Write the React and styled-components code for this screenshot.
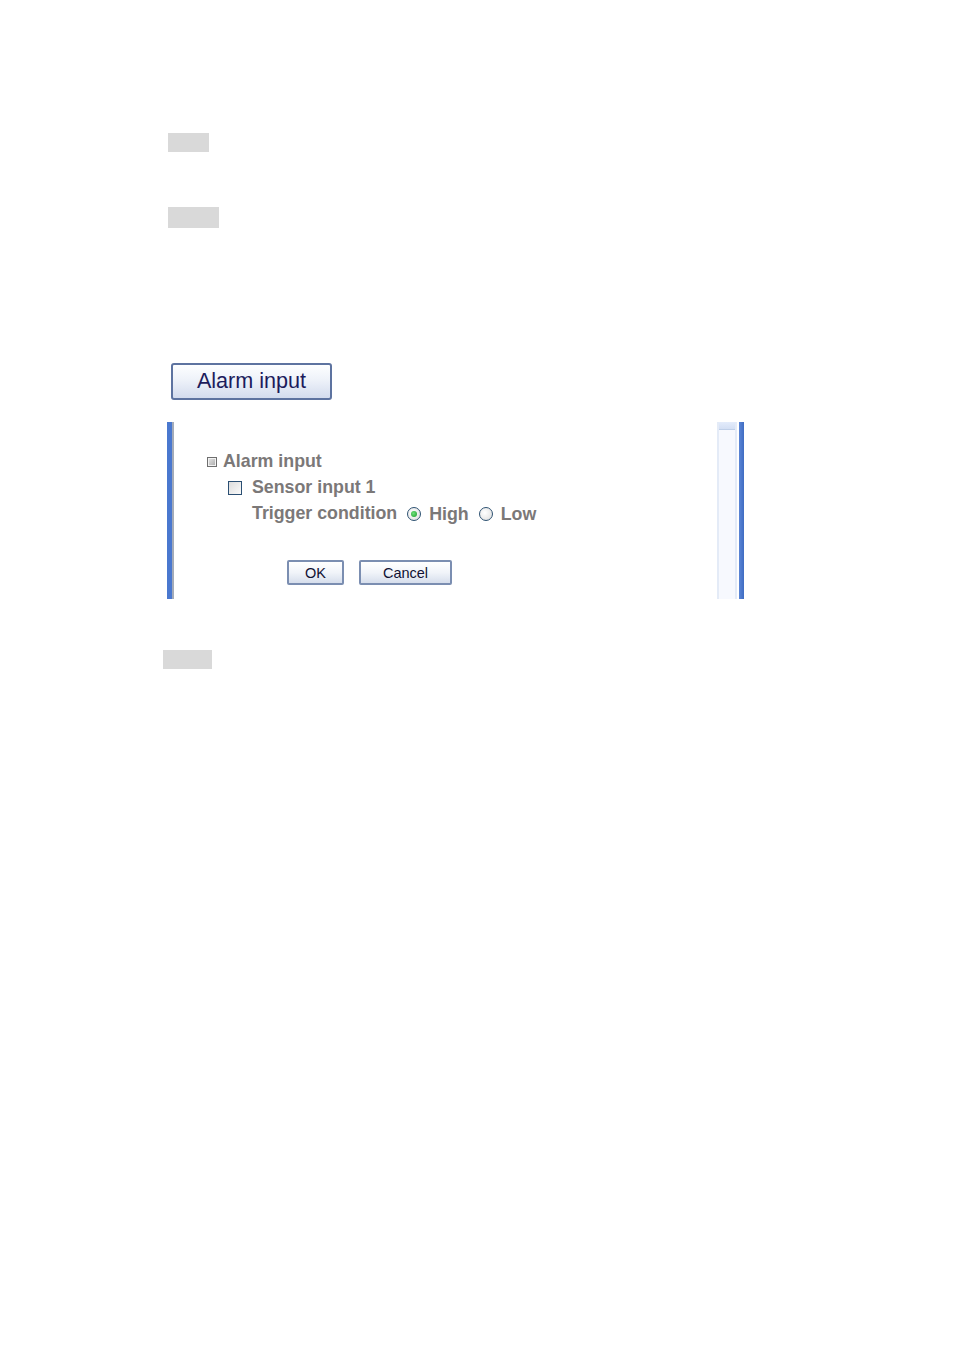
import React from "react";
import styled, { createGlobalStyle } from "styled-components";

const Global = createGlobalStyle`
  html, body { margin: 0; padding: 0; background: #ffffff; }
  body { font-family: "Liberation Sans", Arial, sans-serif; }
`;

const Page = styled.div`
  display: flex;
  flex-direction: column;
  align-items: flex-start;
  padding: 133px 0 0 163px;
  min-height: 1350px;
  box-sizing: border-box;
`;

const Placeholder = styled.div`
  width: ${(p) => p.$w}px;
  height: ${(p) => p.$h}px;
  margin-left: ${(p) => p.$left || 0}px;
  margin-top: ${(p) => p.$top || 0}px;
  background: #d9d9d9;
`;

const TabButton = styled.button`
  margin: ${(p) => p.$top}px 0 0 8px;
  width: 161px;
  height: 37px;
  box-sizing: border-box;
  border: 2px solid #5d73a0;
  border-radius: 3px;
  background: linear-gradient(#fdfeff 0%, #eef2f9 45%, #d3dcee 100%);
  color: #1c1c5c;
  font-family: "Liberation Sans", Arial, sans-serif;
  font-size: 21.6px;
  padding: 0 0 2px;
  cursor: pointer;
`;

const Panel = styled.div`
  margin: 22px 0 0 4px;
  width: 577px;
  height: 177px;
  display: flex;
  box-sizing: border-box;
  border-left: 5px solid #4a78cf;
  box-shadow: inset 2px 0 0 #a3abb9;
`;

const Content = styled.div`
  flex: 1;
  padding: 26px 0 0 35px;
  display: flex;
  flex-direction: column;
  align-items: flex-start;
`;

const Row = styled.div`
  display: flex;
  align-items: center;
  height: 26px;
  margin-left: ${(p) => p.$indent || 0}px;
  color: #7b7878;
  font-size: 17.8px;
  font-weight: bold;
  white-space: nowrap;
`;

const TreeBox = styled.span`
  width: 10px;
  height: 10px;
  box-sizing: border-box;
  border: 1px solid #6e6e6e;
  background: linear-gradient(135deg, #e8e8e8, #a9a9a9);
  box-shadow: inset 0 0 0 1px #f2f2f2;
  margin-right: 6px;
  margin-top: 2px;
`;

const CheckBox = styled.span`
  width: 14px;
  height: 14px;
  box-sizing: border-box;
  border: 1px solid #2b4f73;
  background: linear-gradient(135deg, #dcdcdc, #fafafa);
  margin-right: 10px;
  margin-top: 1px;
`;

const Radio = styled.span`
  width: 14px;
  height: 14px;
  box-sizing: border-box;
  border-radius: 50%;
  border: 1px solid #2e5272;
  background: radial-gradient(circle at 40% 40%, #ffffff, #dcdcdc);
  display: flex;
  align-items: center;
  justify-content: center;
  margin: 2px 8px 0 ${(p) => p.$gap}px;
  &::after {
    content: "";
    display: ${(p) => (p.$checked ? "block" : "none")};
    width: 6px;
    height: 6px;
    border-radius: 50%;
    background: radial-gradient(circle at 40% 40%, #6fe07a, #1a9c2a);
  }
`;

const Label = styled.span`
  margin-top: ${(p) => p.$top || 0}px;
`;

const Actions = styled.div`
  display: flex;
  gap: 15px;
  margin: 34px 0 0 80px;
`;

const SmallButton = styled.button`
  width: ${(p) => p.$w}px;
  height: 25px;
  box-sizing: border-box;
  border: 2px solid #7b8eb1;
  border-radius: 2px;
  background: linear-gradient(#ffffff 0%, #f1f4f9 50%, #d6deec 100%);
  color: #111133;
  font-family: "Liberation Sans", Arial, sans-serif;
  font-size: 14.5px;
  padding: 0;
  cursor: pointer;
`;

const Scrollbar = styled.div`
  width: 20px;
  box-sizing: border-box;
  background: #f7f9fe;
  border-left: 2px solid #e4ebf7;
  border-right: 2px solid #e4ebf7;
  display: flex;
  flex-direction: column;
`;

const Thumb = styled.div`
  height: 7px;
  background: linear-gradient(#e4ecfb, #d3dff4);
  border-bottom: 1px solid #bfcfe8;
`;

const RightEdge = styled.div`
  width: 5px;
  margin-left: 2px;
  background: linear-gradient(90deg, #5b86d6, #3f6cc2);
`;

export default function App() {
  return (
    <>
      <Global />
      <Page>
        <Placeholder $w={41} $h={19} $left={5} />
        <Placeholder $w={51} $h={21} $left={5} $top={55} />
        <TabButton $top={135}>Alarm input</TabButton>
        <Panel>
          <Content>
            <Row>
              <TreeBox />
              <Label>Alarm input</Label>
            </Row>
            <Row $indent={21}>
              <CheckBox />
              <Label>Sensor input 1</Label>
            </Row>
            <Row $indent={45}>
              <Label>Trigger condition</Label>
              <Radio $checked $gap={10} />
              <Label $top={2}>High</Label>
              <Radio $gap={10} />
              <Label $top={2}>Low</Label>
            </Row>
            <Actions>
              <SmallButton $w={57}>OK</SmallButton>
              <SmallButton $w={93}>Cancel</SmallButton>
            </Actions>
          </Content>
          <Scrollbar>
            <Thumb />
          </Scrollbar>
          <RightEdge />
        </Panel>
        <Placeholder $w={49} $h={19} $top={51} />
      </Page>
    </>
  );
}
